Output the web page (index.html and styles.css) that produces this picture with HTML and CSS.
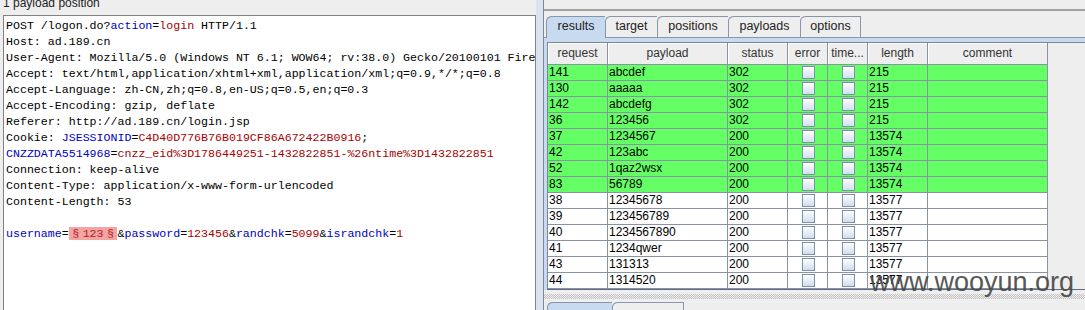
FILE: index.html
```html
<!DOCTYPE html>
<html>
<head>
<meta charset="utf-8">
<link rel="stylesheet" href="styles.css">
</head>
<body>
<div class="left">
  <div class="title"><span>1 payload position</span></div>
  <div class="editor">
<div class="ln">POST /logon.do?<span class="k">action</span>=<span class="v">login</span> HTTP/1.1</div>
<div class="ln">Host: ad.189.cn</div>
<div class="ln">User-Agent: Mozilla/5.0 (Windows NT 6.1; WOW64; rv:38.0) Gecko/20100101 Firefox/38.0</div>
<div class="ln">Accept: text/html,application/xhtml+xml,application/xml;q=0.9,*/*;q=0.8</div>
<div class="ln">Accept-Language: zh-CN,zh;q=0.8,en-US;q=0.5,en;q=0.3</div>
<div class="ln">Accept-Encoding: gzip, deflate</div>
<div class="ln">Referer: http://ad.189.cn/login.jsp</div>
<div class="ln">Cookie: <span class="k">JSESSIONID</span>=<span class="v">C4D40D776B76B019CF86A672422B0916</span>;</div>
<div class="ln"><span class="k">CNZZDATA5514968</span>=<span class="v">cnzz_eid%3D1786449251-1432822851-%26ntime%3D1432822851</span></div>
<div class="ln">Connection: keep-alive</div>
<div class="ln">Content-Type: application/x-www-form-urlencoded</div>
<div class="ln">Content-Length: 53</div>
<div class="ln"> </div>
<div class="ln"><span class="k">username</span>=<span class="mark"><span class="sec">§</span>123<span class="sec">§</span></span>&amp;<span class="k">password</span>=<span class="v">123456</span>&amp;<span class="k">randchk</span>=<span class="v">5099</span>&amp;<span class="k">israndchk</span>=<span class="v">1</span></div>
  </div>
</div>
<div class="splitter"></div>
<div class="right">
  <div class="topbar"></div>
  <div class="tabs">
    <div class="tab sel w1">results</div>
    <div class="tab w2">target</div>
    <div class="tab w3">positions</div>
    <div class="tab w4">payloads</div>
    <div class="tab w5">options</div>
  </div>
  <div class="content">
    <div class="pane">
      <div class="hdr">
        <div>request</div><div>payload</div><div>status</div><div>error</div><div>time...</div><div>length</div><div>comment</div>
      </div>
      <div class="row g"><div>141</div><div>abcdef</div><div>302</div><div class="cbc"><span class="cb"></span></div><div class="cbc"><span class="cb"></span></div><div>215</div><div></div></div>
      <div class="row g"><div>130</div><div>aaaaa</div><div>302</div><div class="cbc"><span class="cb"></span></div><div class="cbc"><span class="cb"></span></div><div>215</div><div></div></div>
      <div class="row g"><div>142</div><div>abcdefg</div><div>302</div><div class="cbc"><span class="cb"></span></div><div class="cbc"><span class="cb"></span></div><div>215</div><div></div></div>
      <div class="row g"><div>36</div><div>123456</div><div>302</div><div class="cbc"><span class="cb"></span></div><div class="cbc"><span class="cb"></span></div><div>215</div><div></div></div>
      <div class="row g"><div>37</div><div>1234567</div><div>200</div><div class="cbc"><span class="cb"></span></div><div class="cbc"><span class="cb"></span></div><div>13574</div><div></div></div>
      <div class="row g"><div>42</div><div>123abc</div><div>200</div><div class="cbc"><span class="cb"></span></div><div class="cbc"><span class="cb"></span></div><div>13574</div><div></div></div>
      <div class="row g"><div>52</div><div>1qaz2wsx</div><div>200</div><div class="cbc"><span class="cb"></span></div><div class="cbc"><span class="cb"></span></div><div>13574</div><div></div></div>
      <div class="row g"><div>83</div><div>56789</div><div>200</div><div class="cbc"><span class="cb"></span></div><div class="cbc"><span class="cb"></span></div><div>13574</div><div></div></div>
      <div class="row"><div>38</div><div>12345678</div><div>200</div><div class="cbc"><span class="cb"></span></div><div class="cbc"><span class="cb"></span></div><div>13577</div><div></div></div>
      <div class="row"><div>39</div><div>123456789</div><div>200</div><div class="cbc"><span class="cb"></span></div><div class="cbc"><span class="cb"></span></div><div>13577</div><div></div></div>
      <div class="row"><div>40</div><div>1234567890</div><div>200</div><div class="cbc"><span class="cb"></span></div><div class="cbc"><span class="cb"></span></div><div>13577</div><div></div></div>
      <div class="row"><div>41</div><div>1234qwer</div><div>200</div><div class="cbc"><span class="cb"></span></div><div class="cbc"><span class="cb"></span></div><div>13577</div><div></div></div>
      <div class="row"><div>43</div><div>131313</div><div>200</div><div class="cbc"><span class="cb"></span></div><div class="cbc"><span class="cb"></span></div><div>13577</div><div></div></div>
      <div class="row"><div>44</div><div>1314520</div><div>200</div><div class="cbc"><span class="cb"></span></div><div class="cbc"><span class="cb"></span></div><div>13577</div><div></div></div>
    </div>
  </div>
  <div class="divider"><div class="dots"></div></div>
  <div class="btabs">
    <div class="btab sel b1"></div>
    <div class="btab b2"></div>
  </div>
</div>
<div class="wm">www.wooyun.org</div>
</body>
</html>
```

FILE: styles.css
```css
body {
  margin: 0;
  width: 1085px;
  height: 310px;
  overflow: hidden;
  background: #eeeeee;
  display: flex;
  position: relative;
  font-family: "Liberation Sans", Arial, sans-serif;
}

.left {
  width: 536px;
  flex: none;
  display: flex;
  flex-direction: column;
}

.title {
  height: 15px;
  flex: none;
  overflow: hidden;
  padding-left: 3px;
  font-size: 12px;
  line-height: 14px;
  color: #222;
}

.title span {
  display: block;
  margin-top: -4px;
}

.editor {
  flex: 1;
  margin-left: 3px;
  background: #ffffff;
  border: 1px solid #828282;
  border-bottom: none;
  padding: 2px 0 0 2px;
  overflow: hidden;
  font-family: "Liberation Mono", monospace;
  font-size: 11.62px;
  line-height: 16px;
  color: #000;
}

.ln {
  white-space: pre;
  height: 16px;
}

.k { color: #0000c0; }
.v { color: #a80000; }

.mark {
  background: #f5a4a4;
  color: #b02020;
}

.sec {
  display: inline-block;
  width: 2ch;
  text-align: center;
}

.splitter {
  width: 7px;
  flex: none;
  background: #dbe3ed;
}

.right {
  flex: 1;
  min-width: 0;
  border-left: 1px solid #7d8799;
  display: flex;
  flex-direction: column;
  overflow: hidden;
}

.topbar {
  height: 9px;
  flex: none;
  border-bottom: 2px solid #a2a2a2;
}

.tabs {
  display: flex;
  align-items: flex-start;
  margin-top: 5px;
  padding-left: 2px;
  height: 21px;
  flex: none;
  position: relative;
  z-index: 1;
}

.tab {
  box-sizing: border-box;
  height: 21px;
  border: 1px solid #8995a8;
  border-bottom: none;
  border-right: none;
  border-top-left-radius: 6px 5px;
  text-align: center;
  font-size: 12.5px;
  line-height: 18px;
  color: #222;
  background: #eeeeee;
}

.tab:last-child { border-right: 1px solid #8995a8; }
.tab.sel { background: #c8daf0; height: 22px; }
.w1 { width: 59px; }
.w2 { width: 52px; }
.w3 { width: 71px; }
.w4 { width: 72px; }
.w5 { width: 61px; }

.content {
  flex: none;
  border-top: 1px solid #8995a8;
  background: #c8daf0;
  padding: 4px 0 0 3px;
}

.pane {
  border-top: 1px solid #7a8598;
  border-left: 1px solid #7a8598;
  border-bottom: 1px solid #5f6b7e;
  background: #eeeeee;
}

.hdr, .row {
  display: grid;
  grid-template-columns: 60px 120px 60px 40px 40px 60px 120px;
  width: 500px;
}

.hdr > div {
  box-sizing: border-box;
  height: 22px;
  border-right: 1px solid #8a93a5;
  border-bottom: 1px solid #8a93a5;
  box-shadow: inset 1px 1px 0 #ffffff;
  text-align: center;
  font-size: 12px;
  line-height: 21px;
  color: #333;
}

.row > div {
  box-sizing: border-box;
  height: 16px;
  border-right: 1px solid #8a93a5;
  border-bottom: 1px solid #8a93a5;
  padding-left: 1px;
  font-size: 12px;
  line-height: 15px;
  color: #000;
  white-space: nowrap;
  overflow: hidden;
  background: #ffffff;
}

.row.g > div { background: #64ff64; }

.row > .cbc {
  display: flex;
  justify-content: center;
  padding-top: 1px;
}

.cb {
  width: 13px;
  height: 13px;
  box-sizing: border-box;
  border: 1px solid #7f8fa6;
  background: linear-gradient(#fdfeff, #d3deee);
}

.divider {
  height: 12px;
  flex: none;
  display: flex;
  align-items: center;
}

.dots {
  flex: 1;
  height: 5px;
  background-image: repeating-conic-gradient(#c2c2c2 0 25%, transparent 0 50%);
  background-size: 2px 2px;
}

.btabs {
  display: flex;
  padding-left: 3px;
  flex: none;
}

.btab {
  box-sizing: border-box;
  height: 20px;
  border: 1px solid #8995a8;
  border-bottom: none;
  border-right: none;
  border-top-left-radius: 6px 5px;
  background: #eeeeee;
}

.btab:last-child { border-right: 1px solid #8995a8; }
.btab.sel { background: #c8daf0; }
.b1 { width: 65px; }
.b2 { width: 72px; }

.wm {
  position: absolute;
  left: 870px;
  top: 269px;
  font-size: 27px;
  line-height: 27px;
  color: #4a4a4a;
  opacity: 0.92;
}
```
